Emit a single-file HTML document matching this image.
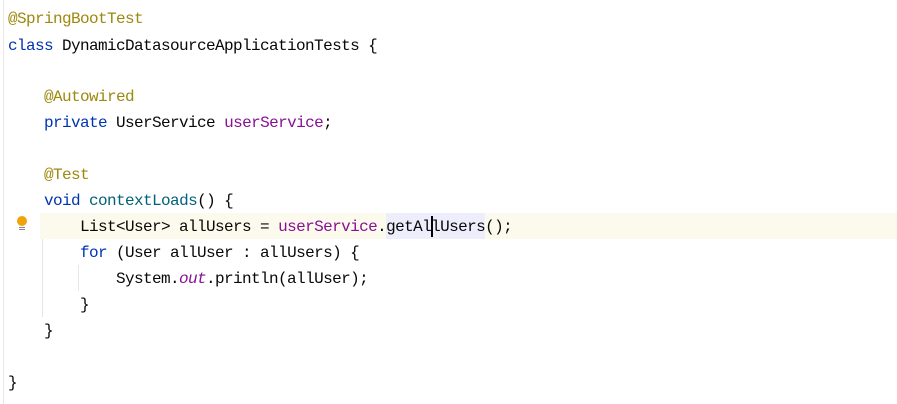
<!DOCTYPE html>
<html><head><style>
body{margin:0;width:897px;height:404px;background:#fff;overflow:hidden;position:relative;font-family:"Liberation Mono",monospace;font-size:16px;letter-spacing:-0.6px;color:#080808}
.l{position:absolute;left:8px;white-space:pre;height:26px;line-height:26px}
.a{color:#9e880d}.k{color:#0033b3}.p{color:#871094}.m{color:#00627a}
</style></head><body>
<div style="position:absolute;left:3px;top:0;width:1px;height:404px;background:#e8e8e8"></div>
<div style="position:absolute;left:40px;top:213px;width:857px;height:26px;background:#fcfaed"></div>
<div style="position:absolute;left:386px;top:213px;width:99px;height:26px;background:#ededfc"></div>
<div style="position:absolute;left:431px;top:216px;width:2px;height:21px;background:#000"></div>
<div style="position:absolute;left:42px;top:239px;width:1px;height:78px;background:#e6e6e6"></div>
<div style="position:absolute;left:78px;top:265px;width:1px;height:26px;background:#e6e6e6"></div>
<div style="position:absolute;left:17px;top:216px;width:10px;height:10px;border-radius:50%;background:#f0a30a"></div>
<div style="position:absolute;left:19px;top:227px;width:6px;height:1px;background:#888"></div>
<div style="position:absolute;left:19px;top:229px;width:6px;height:1px;background:#888"></div>
<div class="l a" style="top:6px">@SpringBootTest</div>
<div class="l" style="top:33px"><span class="k">class</span> DynamicDatasourceApplicationTests {</div>
<div class="l a" style="top:84px">    @Autowired</div>
<div class="l" style="top:110px">    <span class="k">private</span> UserService <span class="p">userService</span>;</div>
<div class="l a" style="top:162px">    @Test</div>
<div class="l" style="top:188px">    <span class="k">void</span> <span class="m">contextLoads</span>() {</div>
<div class="l" style="top:214px">        List&lt;User&gt; allUsers = <span class="p">userService</span>.getAllUsers();</div>
<div class="l" style="top:240px">        <span class="k">for</span> (User allUser : allUsers) {</div>
<div class="l" style="top:266px">            System.<i class="p">out</i>.println(allUser);</div>
<div class="l" style="top:292px">        }</div>
<div class="l" style="top:318px">    }</div>
<div class="l" style="top:370px">}</div>
</body></html>
